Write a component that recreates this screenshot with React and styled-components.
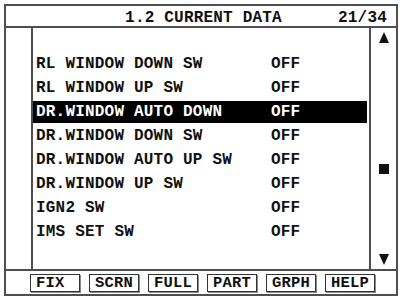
import React from 'react';
import styled, { createGlobalStyle } from 'styled-components';

const line = '#4e4e4e';

const GlobalStyle = createGlobalStyle`
  html, body {
    margin: 0;
    padding: 0;
    background: #ffffff;
  }
  body {
    font-family: 'Liberation Mono', 'DejaVu Sans Mono', monospace;
    font-weight: bold;
    font-size: 16px;
    letter-spacing: 0.2px;
    color: #111;
  }
`;

const Frame = styled.div`
  box-sizing: border-box;
  width: 394px;
  height: 292px;
  margin: 4px 0 0 4px;
  border: 2px solid ${line};
  display: flex;
  flex-direction: column;
  background: #fff;
`;

const Header = styled.div`
  box-sizing: border-box;
  height: 22px;
  border-bottom: 2px solid ${line};
  display: grid;
  grid-template-columns: 1fr auto 1fr;
  align-items: center;
  line-height: 20px;
  padding-top: 2px;
`;

const Title = styled.div`
  grid-column: 2;
  padding-left: 5px;
  white-space: pre;
`;

const Counter = styled.div`
  grid-column: 3;
  justify-self: end;
  padding-right: 9px;
`;

const Body = styled.div`
  flex: 1;
  display: grid;
  grid-template-columns: 25px 1fr 25px;
  min-height: 0;
`;

const List = styled.div`
  border-left: 2px solid ${line};
  border-right: 2px solid ${line};
  display: flex;
  flex-direction: column;
  gap: 2px;
  padding-top: 25px;
`;

const Row = styled.div`
  display: grid;
  grid-template-columns: 235px 1fr;
  height: 22px;
  line-height: 22px;
  padding-left: 3px;
  margin-right: 2px;
  white-space: pre;
  background: ${p => (p.$active ? '#000' : 'transparent')};
  color: ${p => (p.$active ? '#fff' : '#111')};
`;

const Scroll = styled.div`
  display: flex;
  flex-direction: column;
  align-items: center;
  padding: 4px 0 4px 1px;
`;

const Track = styled.div`
  flex: 1;
  display: flex;
  flex-direction: column;
  align-items: center;
`;

const Thumb = styled.div`
  width: 10px;
  height: 10px;
  background: #111;
`;

const Footer = styled.div`
  box-sizing: border-box;
  height: 25px;
  border-top: 2px solid ${line};
  display: flex;
  gap: 9px;
  padding: 3px 0 0 24px;
`;

const Key = styled.div`
  box-sizing: border-box;
  width: 50px;
  height: 18px;
  border: 1px solid #333;
  box-shadow: 1px 1px 0 #8a8a8a;
  padding-left: 5px;
  line-height: 16px;
  font-size: 15.5px;
`;

const Arrow = ({ down }) => (
  <svg width="10" height="11" viewBox="0 0 10 11">
    <polygon points={down ? '0,0 10,0 5,11' : '5,0 10,11 0,11'} fill="#111" />
  </svg>
);

const rows = [
  ['RL WINDOW DOWN SW', 'OFF'],
  ['RL WINDOW UP SW', 'OFF'],
  ['DR.WINDOW AUTO DOWN', 'OFF'],
  ['DR.WINDOW DOWN SW', 'OFF'],
  ['DR.WINDOW AUTO UP SW', 'OFF'],
  ['DR.WINDOW UP SW', 'OFF'],
  ['IGN2 SW', 'OFF'],
  ['IMS SET SW', 'OFF'],
];

const keys = ['FIX', 'SCRN', 'FULL', 'PART', 'GRPH', 'HELP'];

const App = () => {
  const current = 21;
  const total = 34;
  const selected = 2;
  // thumb offset inside the track, from the position in the list
  const thumbTop = Math.round((current / total) * 202) - 4;

  return (
    <>
      <GlobalStyle />
      <Frame>
        <Header>
          <Title>1.2 CURRENT DATA</Title>
          <Counter>
            {current}/{total}
          </Counter>
        </Header>
        <Body>
          <div />
          <List>
            {rows.map(([name, value], i) => (
              <Row key={name} $active={i === selected}>
                <span>{name}</span>
                <span>{value}</span>
              </Row>
            ))}
          </List>
          <Scroll>
            <Arrow />
            <Track>
              <Thumb style={{ marginTop: thumbTop }} />
            </Track>
            <Arrow down />
          </Scroll>
        </Body>
        <Footer>
          {keys.map(k => (
            <Key key={k}>{k}</Key>
          ))}
        </Footer>
      </Frame>
    </>
  );
};

export default App;
